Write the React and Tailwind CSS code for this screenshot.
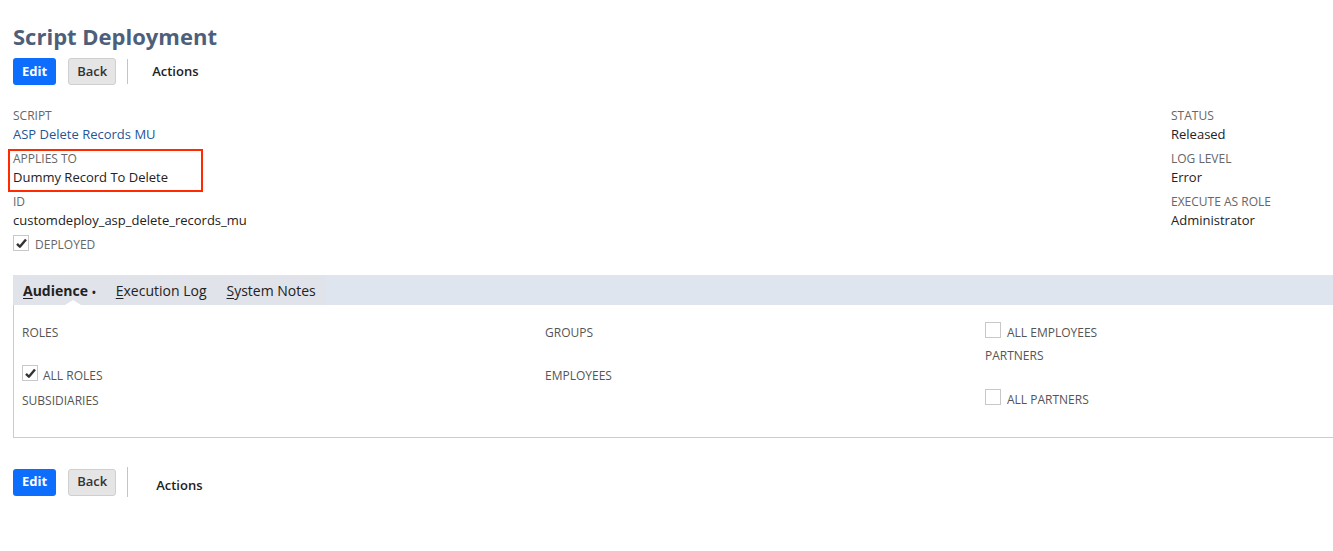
import React from "react";

const font = { fontFamily: '"Open Sans", "Noto Sans", sans-serif' };

function Check({ checked }) {
  return (
    <span className="inline-flex h-[16px] w-[16px] items-center justify-center border border-[#c8c8c8] bg-white">
      {checked && (
        <svg viewBox="0 0 16 16" className="h-[13px] w-[13px]">
          <path d="M2.5 8.5 L6 12 L13.5 3" fill="none" stroke="#333" strokeWidth="3" strokeLinejoin="round" />
        </svg>
      )}
    </span>
  );
}

function Toolbar({ bottom }) {
  return (
    <div className="flex items-center">
      <button className="h-[27px] rounded-[3px] bg-[#0d6efd] px-[9px] text-[13px] font-bold text-white">Edit</button>
      <button className="ml-[12px] h-[27px] rounded-[3px] border border-[#cfcfcf] bg-[#e5e5e5] px-[8px] text-[13px] font-semibold text-[#333]">
        Back
      </button>
      <div className={`ml-[11px] w-px bg-[#c4c4c4] ${bottom ? "h-[30px] self-start" : "h-[25px]"}`} />
      <span className={`text-[13px] font-semibold text-[#222] ${bottom ? "ml-[28px] mt-[7px]" : "ml-[24px]"}`}>Actions</span>
    </div>
  );
}

function Field({ label, value, link }) {
  return (
    <div className="whitespace-nowrap leading-[18px]">
      <div className="text-[12px] text-[#666]">{label}</div>
      <div className={`text-[13px] ${link ? "text-[#255599]" : "text-[#222]"}`}>{value}</div>
    </div>
  );
}

export default function App() {
  return (
    <div className="min-h-[551px] bg-white pt-[22px] pl-[13px]" style={font}>
      <h1 className="text-[22px] font-bold leading-[28px] text-[#4d5f7a]">Script Deployment</h1>
      <div className="mt-[8px]">
        <Toolbar />
      </div>

      <div className="mt-[22px] flex">
        <div className="flex flex-1 flex-col gap-[7px]">
          <Field label="SCRIPT" value="ASP Delete Records MU" link />
          <div className="relative">
            <div className="pointer-events-none absolute -top-[1px] -left-[5px] h-[43px] w-[195px] border-[2.5px] border-[#ff2a00]" />
            <Field label="APPLIES TO" value="Dummy Record To Delete" />
          </div>
          <Field label="ID" value="customdeploy_asp_delete_records_mu" />
          <div className="-mt-[4px] flex items-center gap-[6px]">
            <Check checked />
            <span className="mt-[4px] text-[12px] text-[#666]">DEPLOYED</span>
          </div>
        </div>
        <div className="flex w-[162px] flex-col gap-[7px]">
          <Field label="STATUS" value="Released" />
          <Field label="LOG LEVEL" value="Error" />
          <Field label="EXECUTE AS ROLE" value="Administrator" />
        </div>
      </div>

      <div className="mt-[21px]">
        <div className="flex h-[30px] bg-[#dee5ef]">
          <div className="relative flex items-center bg-[#e0e3ea] pl-[10px] pr-[10px] text-[14px] text-[#222]">
            <span className="font-bold">
              <span className="underline underline-offset-2">A</span>udience
              <span className="ml-[4px] text-[10px]">•</span>
            </span>
            <span className="ml-[20px]">
              <span className="underline underline-offset-2">E</span>xecution Log
            </span>
            <span className="ml-[20px]">
              <span className="underline underline-offset-2">S</span>ystem Notes
            </span>
            <span className="absolute bottom-0 left-[52px] h-0 w-0 border-x-[8px] border-b-[5px] border-x-transparent border-b-white" />
          </div>
        </div>
        <div className="h-[133px] border-b border-l border-[#cccccc] pl-[8px] text-[12px] text-[#555]">
          <div className="grid grid-cols-[523px_440px_1fr]">
            <div className="flex flex-col">
              <div className="mt-[20px] leading-[16px]">ROLES</div>
              <div className="mt-[20px] flex items-center gap-[5px]">
                <Check checked />
                <span className="mt-[6px]">ALL ROLES</span>
              </div>
              <div className="mt-[8px] leading-[16px]">SUBSIDIARIES</div>
            </div>
            <div className="flex flex-col">
              <div className="mt-[20px] leading-[16px]">GROUPS</div>
              <div className="mt-[27px] leading-[16px]">EMPLOYEES</div>
            </div>
            <div className="flex flex-col">
              <div className="mt-[13px] flex items-center gap-[6px]">
                <Check />
                <span className="mt-[6px]">ALL EMPLOYEES</span>
              </div>
              <div className="mt-[6px] leading-[16px]">PARTNERS</div>
              <div className="mt-[21px] flex items-center gap-[6px]">
                <Check />
                <span className="mt-[6px]">ALL PARTNERS</span>
              </div>
            </div>
          </div>
        </div>
      </div>

      <div className="mt-[29px]">
        <Toolbar bottom />
      </div>
    </div>
  );
}
